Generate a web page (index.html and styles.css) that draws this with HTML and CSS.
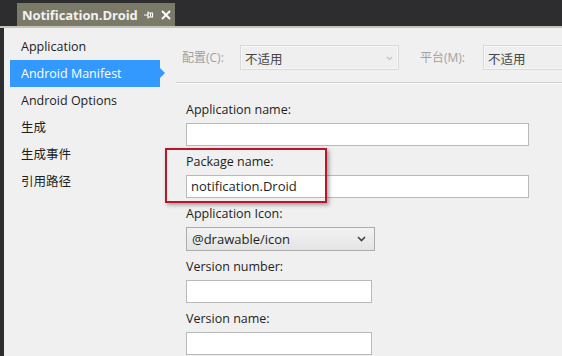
FILE: index.html
```html
<!DOCTYPE html>
<html lang="zh-CN">
<head>
  <meta charset="UTF-8">
  <title>Notification.Droid</title>
  <link rel="stylesheet" href="styles.css">
</head>
<body>
  <div class="doc-bar">
    <div class="doc-tab">
      <span class="doc-title">Notification.Droid</span>
      <svg class="pin" width="10" height="8" viewBox="0 0 10 8">
        <path d="M0 4H4M4 0.5V7.5M4 2H8.5V6H4" fill="none" stroke="#fff" stroke-width="1.2"/>
        <path d="M6.5 2V6" stroke="#fff" stroke-width="1"/>
      </svg>
      <svg class="close" width="10" height="10" viewBox="0 0 10 10">
        <path d="M1 1L9 9M9 1L1 9" stroke="#fff" stroke-width="2"/>
      </svg>
    </div>
  </div>

  <div class="editor">
    <ul class="side-nav">
      <li>Application</li>
      <li class="active">Android Manifest</li>
      <li>Android Options</li>
      <li>生成</li>
      <li>生成事件</li>
      <li>引用路径</li>
    </ul>

    <div class="panel">
      <div class="config-row">
        <span class="config-label">配置(C):</span>
        <div class="config-box wide">不适用
          <svg class="chev" width="7" height="5" viewBox="0 0 7 5"><path d="M1 1L3.5 3.5L6 1" fill="none" stroke="#c0c0c0" stroke-width="1.2"/></svg>
        </div>
        <span class="config-label plat">平台(M):</span>
        <div class="config-box">不适用</div>
      </div>

      <div class="form">
        <div class="field">
          <label>Application name:</label>
          <div class="text-box long"></div>
        </div>
        <div class="field">
          <label>Package name:</label>
          <div class="text-box long">notification.Droid</div>
          <div class="highlight"></div>
        </div>
        <div class="field">
          <label>Application Icon:</label>
          <div class="combo">@drawable/icon
            <svg width="9" height="6" viewBox="0 0 9 6"><path d="M1 1L4.5 4.5L8 1" fill="none" stroke="#444" stroke-width="1.6"/></svg>
          </div>
        </div>
        <div class="field">
          <label>Version number:</label>
          <div class="text-box short"></div>
        </div>
        <div class="field">
          <label>Version name:</label>
          <div class="text-box short"></div>
        </div>
      </div>
    </div>
  </div>
</body>
</html>
```

FILE: styles.css
```css
html, body {
  margin: 0;
  height: 100%;
}
body {
  font-family: "Open Sans", "Noto Sans CJK SC", sans-serif;
  font-size: 13px;
  color: #1e1e1e;
  background-color: #f0f0f0;
  overflow: hidden;
}
.doc-bar {
  height: 26px;
  background-color: #2d2d30;
  border-bottom: 2px solid #c4c3b9;
  display: flex;
  align-items: flex-end;
  padding-left: 17px;
}
.doc-tab {
  width: 158px;
  height: 23px;
  background-color: #7b7968;
  display: flex;
  align-items: center;
  box-sizing: border-box;
  padding-left: 5px;
}
.doc-title {
  color: #f2f2f0;
  font-weight: bold;
  font-size: 13px;
  letter-spacing: -0.1px;
}
.pin {
  margin-left: 6px;
}
.close {
  margin-left: 7px;
}
.editor {
  display: flex;
  height: calc(100% - 28px);
  border-left: 4px solid #2d2d30;
}
.side-nav {
  list-style: none;
  margin: 0;
  padding: 5px 0 0 6px;
  width: 160px;
  flex-shrink: 0;
}
.side-nav li {
  height: 27px;
  line-height: 27px;
  width: 150px;
  padding-left: 11px;
  box-sizing: border-box;
  position: relative;
  font-size: 12.5px;
}
.side-nav li.active {
  background-color: #3399ff;
  color: #fff;
}
.side-nav li.active::after {
  content: "";
  position: absolute;
  right: -5px;
  top: 8px;
  border-left: 5px solid #3399ff;
  border-top: 5px solid transparent;
  border-bottom: 5px solid transparent;
}
.panel {
  flex: 1;
  min-width: 0;
}
.config-row {
  display: flex;
  align-items: center;
  height: 26px;
  margin-top: 16px;
  padding-left: 6px;
  padding-bottom: 12px;
  margin-left: 6px;
  border-bottom: 1px solid #cfcfcf;
  box-shadow: 0 1px 0 #fafafa;
  overflow: hidden;
}
.config-label {
  color: #a0a0a0;
  font-size: 12px;
  width: 58px;
  flex-shrink: 0;
}
.config-label.plat {
  margin-left: 21px;
  width: 63px;
}
.config-box {
  height: 25px;
  box-sizing: border-box;
  border: 1px solid #d9d9d9;
  box-shadow: inset 0 0 0 1px #f7f7f7;
  background-color: #efefef;
  color: #444;
  font-size: 12.5px;
  padding: 3px 4px;
  width: 120px;
  flex-shrink: 0;
  position: relative;
}
.config-box.wide {
  width: 159px;
}
.chev {
  position: absolute;
  right: 5px;
  top: 10px;
}
.form {
  padding: 19px 0 0 16px;
}
.field {
  position: relative;
  margin-bottom: 8px;
}
.field label {
  display: block;
  height: 16px;
  line-height: 16px;
  margin-bottom: 5px;
  font-size: 12.5px;
}
.text-box {
  height: 23px;
  box-sizing: border-box;
  background-color: #fff;
  border: 1px solid #b9b9b9;
  padding: 2px 4px;
  font-size: 13px;
  line-height: 17px;
}
.text-box.long {
  width: 343px;
}
.text-box.short {
  width: 186px;
}
.combo {
  width: 189px;
  height: 24px;
  box-sizing: border-box;
  border: 1px solid #acacac;
  background: linear-gradient(#f3f3f3, #e4e4e4);
  padding: 0 8px 0 5px;
  display: flex;
  align-items: center;
  justify-content: space-between;
  font-size: 13px;
}
.highlight {
  position: absolute;
  left: -21px;
  top: -6px;
  width: 162px;
  height: 55px;
  box-sizing: border-box;
  border: 2px solid #b5172b;
  box-shadow: 2px 2px 4px rgba(0, 0, 0, 0.35);
  pointer-events: none;
}
```
